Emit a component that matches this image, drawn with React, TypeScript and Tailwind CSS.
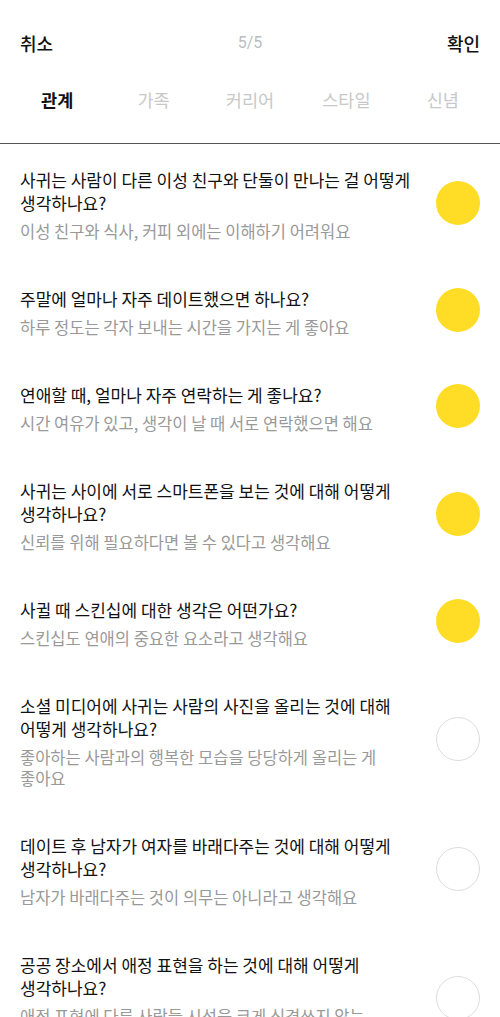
import { useState } from "react";

const tabs = ["관계", "가족", "커리어", "스타일", "신념"];

const questions = [
  { q: "사귀는 사람이 다른 이성 친구와 단둘이 만나는 걸 어떻게 생각하나요?", a: "이성 친구와 식사, 커피 외에는 이해하기 어려워요", done: true },
  { q: "주말에 얼마나 자주 데이트했으면 하나요?", a: "하루 정도는 각자 보내는 시간을 가지는 게 좋아요", done: true },
  { q: "연애할 때, 얼마나 자주 연락하는 게 좋나요?", a: "시간 여유가 있고, 생각이 날 때 서로 연락했으면 해요", done: true },
  { q: "사귀는 사이에 서로 스마트폰을 보는 것에 대해 어떻게 생각하나요?", a: "신뢰를 위해 필요하다면 볼 수 있다고 생각해요", done: true },
  { q: "사귈 때 스킨십에 대한 생각은 어떤가요?", a: "스킨십도 연애의 중요한 요소라고 생각해요", done: true },
  { q: "소셜 미디어에 사귀는 사람의 사진을 올리는 것에 대해 어떻게 생각하나요?", a: "좋아하는 사람과의 행복한 모습을 당당하게 올리는 게 좋아요", done: false },
  { q: "데이트 후 남자가 여자를 바래다주는 것에 대해 어떻게 생각하나요?", a: "남자가 바래다주는 것이 의무는 아니라고 생각해요", done: false },
  { q: "공공 장소에서 애정 표현을 하는 것에 대해 어떻게 생각하나요?", a: "애정 표현에 다른 사람들 시선을 크게 신경쓰지 않는 편이에요", done: false },
];

export default function App() {
  const [tab, setTab] = useState(0);

  return (
    <div className="w-[500px] h-[1017px] overflow-hidden bg-white" style={{ fontFamily: "'Noto Sans CJK KR', Roboto, sans-serif" }}>
      {/* Header */}
      <div className="h-[86px] px-5 flex items-center justify-between">
        <button className="text-[18px] font-medium text-[#111] leading-6">취소</button>
        <span className="text-[16px] text-[#bdbdbd] leading-6" style={{ fontFamily: "Roboto, sans-serif" }}>5/5</span>
        <button className="text-[18px] font-medium text-[#111] leading-6">확인</button>
      </div>

      {/* Tabs */}
      <div className="h-[28px] px-[9px] grid grid-cols-5">
        {tabs.map((t, i) => (
          <button key={t} onClick={() => setTab(i)}
            className={i === tab ? "text-[17.5px] font-bold text-[#111] leading-7" : "text-[17.5px] text-[#c8c8c8] leading-7"}>
            {t}
          </button>
        ))}
      </div>
      <div className="mt-[29px] border-t border-[#555]" />

      {/* Questions */}
      <div className="pt-[24px] flex flex-col gap-[45px]">
        {questions.map((item, i) => (
          <div key={i} className="px-5 flex items-center gap-[20px]">
            <div className="flex-1 break-keep">
              <p className="text-[17px] leading-[23px] text-[#111]">{item.q}</p>
              <p className="mt-[7px] text-[16.5px] leading-[21px] text-[#999]">{item.a}</p>
            </div>
            <div className={item.done
              ? "w-[44px] h-[44px] mb-[5px] shrink-0 rounded-full bg-[#ffdd26]"
              : "w-[44px] h-[44px] mb-[5px] shrink-0 rounded-full border border-[#dddddd]"} />
          </div>
        ))}
      </div>
    </div>
  );
}
